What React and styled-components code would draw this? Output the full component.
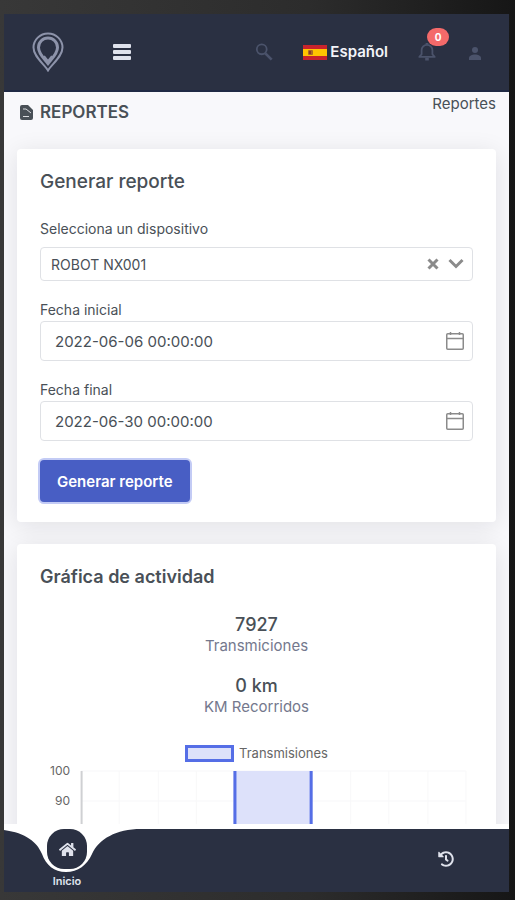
import React, {useState} from 'react';
import styled, {createGlobalStyle} from 'styled-components';
import {FaHome, FaHistory} from 'react-icons/fa';

const GlobalStyle = createGlobalStyle`
  * {
    box-sizing: border-box;
  }
  body {
    margin: 0;
    background: linear-gradient(90deg, #383838 0%, #2c2c2c 60%, #161616 100%);
    color: #495057;
    font-family: Inter, 'Open Sans', sans-serif;
    font-size: 14px;
    line-height: 20px;
  }
  button, input, select {
    font-family: inherit;
    color: inherit;
  }
`;

const Screen = styled.div`
  display: flex;
  flex-direction: column;
  height: 100vh;
  padding: 14px 6px 8px 4px;
`;

const Header = styled.header`
  display: flex;
  flex: none;
  align-items: center;
  justify-content: space-between;
  height: 78px;
  padding: 0 25px 0 28px;
  background: #2a3042;
  border-bottom: 2px solid #202a45;
`;

const HeaderGroup = styled.div`
  display: flex;
  align-items: center;
  gap: ${props => props.$gap}px;
  color: ${props => props.$color || 'inherit'};
`;

const IconButton = styled.button`
  position: relative;
  display: flex;
  align-items: center;
  justify-content: center;
  flex: none;
  width: 18px;
  height: 24px;
  padding: 0;
  border: 0;
  background: none;
  color: ${props => props.$color || '#4b536b'};
  cursor: pointer;
`;

const LogoLink = styled.a`
  display: flex;
  color: #8d93aa;
`;

const LangButton = styled.button`
  display: flex;
  align-items: center;
  gap: 3px;
  padding: 0;
  border: 0;
  background: none;
  color: #f3f4f9;
  font-size: 15px;
  font-weight: 600;
  line-height: 20px;
  cursor: pointer;
`;

const Badge = styled.span`
  position: absolute;
  top: -12px;
  left: 9px;
  width: 22px;
  height: 18px;
  border-radius: 9px;
  background: #f46a6a;
  color: #fff;
  font-size: 10px;
  font-weight: 700;
  line-height: 18px;
  text-align: center;
`;

const Main = styled.main`
  flex: 1;
  min-height: 0;
  overflow: hidden;
  padding: 0 13px;
  background: #f8f8fb;
`;

const TitleRow = styled.div`
  display: flex;
  align-items: flex-start;
  justify-content: space-between;
  height: 57px;
  padding: 2px 0 0 3px;
  font-size: 15px;
`;

const PageTitle = styled.h1`
  display: flex;
  align-items: center;
  gap: 7px;
  margin: 8px 0 0;
  font-size: 17px;
  font-weight: 600;
  line-height: 20px;
  text-transform: uppercase;
`;

const Card = styled.section`
  margin-bottom: 22px;
  padding: 23px 23px 20px;
  border-radius: 4px;
  background: #fff;
  box-shadow: 0 4px 24px rgba(18, 22, 30, 0.1);
`;

const CardTitle = styled.h2`
  margin: 0 0 27px;
  font-size: ${props => props.$size}px;
  font-weight: ${props => props.$weight};
  line-height: 20px;
`;

const Field = styled.div`
  margin-bottom: 19px;
`;

const Label = styled.label`
  display: block;
  margin-bottom: ${props => props.$space || 1}px;
`;

const Control = styled.div`
  display: flex;
  align-items: center;
  height: ${props => props.$height || 40}px;
  padding: 0 8px 0 ${props => props.$left || 14}px;
  border: 1px solid #dfe1e5;
  border-radius: 4px;
  background: #fff;
`;

const Select = styled.select`
  flex: 1;
  min-width: 0;
  padding: 0;
  border: 0;
  outline: 0;
  background: none;
  appearance: none;
  font-size: 14px;
`;

const Input = styled.input`
  flex: 1;
  min-width: 0;
  padding: 0;
  border: 0;
  outline: 0;
  background: none;
  font-size: 15px;
`;

const SubmitButton = styled.button`
  display: block;
  height: 42px;
  padding: 0 17px;
  border: 0;
  border-radius: 4px;
  background: #485ec4;
  box-shadow: 0 0 0 2px #c3cbf5;
  color: #fff;
  font-size: 15px;
  font-weight: 600;
  cursor: pointer;
`;

const Stat = styled.div`
  margin-bottom: 19px;
  color: #74788d;
  font-size: 15px;
  text-align: center;
`;

const StatValue = styled.strong`
  display: block;
  color: #495057;
  font-size: 18px;
  font-weight: 500;
  line-height: 22px;
`;

const Legend = styled.div`
  display: flex;
  align-items: center;
  justify-content: center;
  gap: 5px;
  margin-top: 26px;
  color: #666;
  font-size: 13px;
`;

const LegendBox = styled.span`
  width: 49px;
  height: 17px;
  border: 3px solid #556ee6;
  background: #dde1fa;
`;

const ChartSvg = styled.svg`
  display: block;
  width: 100%;
`;

const BottomNav = styled.nav`
  position: relative;
  display: flex;
  flex: none;
  align-items: flex-start;
  justify-content: space-between;
  height: 68px;
  padding: 0 53px 0 37px;
  border-top: 5px solid #fff;
  background: #2a3042;
`;

const Notch = styled.svg`
  position: absolute;
  top: -1px;
  left: 0;
`;

const NavLink = styled.a`
  position: relative;
  display: flex;
  flex-direction: column;
  align-items: center;
  min-width: ${props => props.$width}px;
  padding-top: ${props => props.$top || 0}px;
  color: #dfe2ec;
  font-size: 11px;
  font-weight: 600;
  line-height: 14px;
  text-decoration: none;
`;

const NavBubble = styled.span`
  display: flex;
  align-items: center;
  justify-content: center;
  width: 40px;
  height: 40px;
  margin-bottom: 5px;
  border-radius: 17px;
  background: #2a3042;
`;

const Logo = () => (
  <svg width="32" height="40" viewBox="0 0 32 40" fill="none" stroke="currentColor">
    <path
      d="M16 38.500C12 32 1.500 24.500 1.500 15.500a14.500 14 0 0 1 29 0C30.500 24.500 20 32 16 38.500Z"
      strokeWidth="2"
    />
    <path
      d="M16 31.500C13 27.500 6.500 22 6.500 15.500a9.500 9.500 0 0 1 19 0C25.500 22 19 27.500 16 31.500Z"
      strokeWidth="3"
    />
    <path d="M12 24l4 5 4-5" strokeWidth="2" />
  </svg>
);

const MenuIcon = () => (
  <svg width="18" height="18" viewBox="0 0 18 18" fill="currentColor">
    <rect x="0" y="1" width="18" height="4" rx="1" />
    <rect x="0" y="7" width="18" height="4" rx="1" />
    <rect x="0" y="13" width="18" height="4" rx="1" />
  </svg>
);

const SearchIcon = () => (
  <svg width="20" height="20" viewBox="0 0 20 20" fill="none" stroke="currentColor" strokeWidth="2">
    <circle cx="7.500" cy="7" r="5.500" />
    <path d="M11.500 11.500l7 7" strokeWidth="3" />
  </svg>
);

const SpainFlag = () => (
  <svg width="24" height="15" viewBox="0 0 24 15">
    <rect width="24" height="15" fill="#c8232c" />
    <rect y="4" width="24" height="7" fill="#ffc400" />
    <rect x="5" y="5" width="5" height="5" rx="1" fill="#ad6b24" />
    <rect x="6" y="6" width="2" height="3" fill="#8b3a2a" />
  </svg>
);

const BellIcon = () => (
  <svg width="20" height="20" viewBox="0 0 20 20" fill="none" stroke="currentColor" strokeWidth="2">
    <path d="M1.500 15.500h17L16 12.500V8A6 6 0 0 0 4 8v4.500z" strokeLinejoin="round" />
    <path d="M8 18h4M10 0v2" strokeWidth="3" />
  </svg>
);

const UserIcon = () => (
  <svg width="12" height="16" viewBox="0 0 12 16" fill="currentColor">
    <circle cx="6" cy="6" r="3" />
    <path d="M0 16v-2c0-2 3-3.500 6-3.500s6 1.500 6 3.500v2z" />
  </svg>
);

const FileIcon = () => (
  <svg width="13" height="15" viewBox="0 0 13 15">
    <path d="M2 0h6l5 5v8a2 2 0 0 1-2 2H2a2 2 0 0 1-2-2V2a2 2 0 0 1 2-2z" fill="#495057" />
    <path d="M3 4h3l5 4M3 11.500h6" fill="none" stroke="#d9dbdf" />
  </svg>
);

const ClearIcon = () => (
  <svg width="12" height="12" viewBox="0 0 12 12" stroke="currentColor" strokeWidth="3">
    <path d="M1.500 1.500l9 9M10.500 1.500l-9 9" />
  </svg>
);

const ChevronIcon = () => (
  <svg width="16" height="12" viewBox="0 0 16 12" fill="none" stroke="currentColor" strokeWidth="3">
    <path d="M1.500 2l6.500 6.500L14.500 2" />
  </svg>
);

const CalendarIcon = () => (
  <svg width="18" height="18" viewBox="0 0 18 18" fill="none" stroke="currentColor">
    <rect x="0.750" y="1.750" width="16.500" height="15.500" rx="1" strokeWidth="1.500" />
    <path d="M1 6.500h16M4.500 0v3M13.500 0v3" strokeWidth="1.500" />
  </svg>
);

const ticks = [100, 90];
const columns = [79, 118, 156, 195, 271, 310, 348, 387, 425];

const ActivityChart = () => (
  <ChartSvg viewBox="0 0 432 68" role="img" aria-label="Transmisiones">
    {ticks.map((tick, i) => (
      <g key={tick}>
        <text x="30" y={12 + i * 30} textAnchor="end" fontSize="12" fill="#666">
          {tick}
        </text>
        <path d={`M41 ${8 + i * 30}H425`} stroke="#f8f8f9" />
      </g>
    ))}
    {columns.map(x => (
      <path key={x} d={`M${x} 8V68`} stroke="#f8f8f9" />
    ))}
    <path d="M41.500 8V68" stroke="#cfd0d3" strokeWidth="2" />
    <rect x="193" y="8" width="79" height="60" fill="#dde1fa" />
    <path d="M194.500 8V68M270.500 8V68" stroke="#556ee6" strokeWidth="3" />
  </ChartSvg>
);

const DateField = ({id, label, value, onChange}) => (
  <Field>
    <Label htmlFor={id}>{label}</Label>
    <Control>
      <Input id={id} type="text" value={value} onChange={e => onChange(e.target.value)} />
      <IconButton type="button" $color="#8b8b8b" aria-label={label}>
        <CalendarIcon />
      </IconButton>
    </Control>
  </Field>
);

const App = () => {
  const [device, setDevice] = useState('ROBOT NX001');
  const [start, setStart] = useState('2022-06-06 00:00:00');
  const [end, setEnd] = useState('2022-06-30 00:00:00');

  return (
    <Screen>
      <GlobalStyle />
      <Header>
        <HeaderGroup $gap={49}>
          <LogoLink href="#inicio" aria-label="Inicio">
            <Logo />
          </LogoLink>
          <IconButton type="button" $color="#dfe2ec" aria-label="Menu">
            <MenuIcon />
          </IconButton>
        </HeaderGroup>
        <HeaderGroup $gap={30}>
          <IconButton type="button" aria-label="Buscar">
            <SearchIcon />
          </IconButton>
          <LangButton type="button">
            <SpainFlag />
            Español
          </LangButton>
          <IconButton type="button" aria-label="Notificaciones">
            <BellIcon />
            <Badge>0</Badge>
          </IconButton>
          <IconButton type="button" aria-label="Usuario">
            <UserIcon />
          </IconButton>
        </HeaderGroup>
      </Header>

      <Main>
        <TitleRow>
          <PageTitle>
            <FileIcon />
            Reportes
          </PageTitle>
          <span>Reportes</span>
        </TitleRow>

        <Card>
          <CardTitle $size={19} $weight={500}>
            Generar reporte
          </CardTitle>
          <form onSubmit={e => e.preventDefault()}>
            <Field>
              <Label htmlFor="device" $space={8}>
                Selecciona un dispositivo
              </Label>
              <Control $height={34} $left={10}>
                <Select id="device" value={device} onChange={e => setDevice(e.target.value)}>
                  <option value="" />
                  <option value="ROBOT NX001">ROBOT NX001</option>
                </Select>
                <HeaderGroup $gap={6} $color="#8b8b8b">
                  <IconButton
                    type="button"
                    $color="#8b8b8b"
                    aria-label="Limpiar"
                    onClick={() => setDevice('')}
                  >
                    <ClearIcon />
                  </IconButton>
                  <ChevronIcon />
                </HeaderGroup>
              </Control>
            </Field>
            <DateField id="start" label="Fecha inicial" value={start} onChange={setStart} />
            <DateField id="end" label="Fecha final" value={end} onChange={setEnd} />
            <SubmitButton type="submit">Generar reporte</SubmitButton>
          </form>
        </Card>

        <Card>
          <CardTitle $size={18} $weight={600}>
            Gráfica de actividad
          </CardTitle>
          <Stat>
            <StatValue>7927</StatValue>
            Transmiciones
          </Stat>
          <Stat>
            <StatValue>0 km</StatValue>
            KM Recorridos
          </Stat>
          <Legend>
            <LegendBox />
            Transmisiones
          </Legend>
          <ActivityChart />
        </Card>
      </Main>

      <BottomNav>
        <Notch width="140" height="46" viewBox="0 0 140 46">
          <path
            d="M0 0V2C22 5 33 14 38 26C42 37 50 44 62 44S83 37 88 26C95 11 112 1 137 1V0Z"
            fill="#fff"
          />
        </Notch>
        <NavLink href="#inicio" $width={52}>
          <NavBubble>
            <FaHome size={17} />
          </NavBubble>
          Inicio
        </NavLink>
        <NavLink href="#historial" $width={20} $top={22} aria-label="Historial">
          <FaHistory size={16} />
        </NavLink>
      </BottomNav>
    </Screen>
  );
};

export default App;
